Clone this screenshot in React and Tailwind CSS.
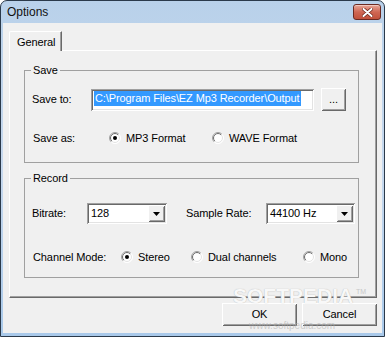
import React from 'react';

const raised =
  'shadow-[inset_1px_1px_#ffffff,inset_-1px_-1px_#696969,inset_2px_2px_#f0f0f0,inset_-2px_-2px_#a0a0a0]';
const sunken =
  'shadow-[inset_1px_1px_#a0a0a0,inset_-1px_-1px_#ffffff,inset_2px_2px_#696969,inset_-2px_-2px_#e3e3e3]';

const Radio = ({ checked }) => (
  <svg width="12" height="12" viewBox="0 0 12 12" className="shrink-0">
    <defs>
      <linearGradient id="rOuter" x1="0" y1="0" x2="1" y2="1">
        <stop offset="0.45" stopColor="#a0a0a0" />
        <stop offset="0.55" stopColor="#ffffff" />
      </linearGradient>
      <linearGradient id="rInner" x1="0" y1="0" x2="1" y2="1">
        <stop offset="0.45" stopColor="#696969" />
        <stop offset="0.55" stopColor="#e3e3e3" />
      </linearGradient>
    </defs>
    <circle cx="6" cy="6" r="5.5" fill="#ffffff" stroke="url(#rOuter)" strokeWidth="1" />
    <circle cx="6" cy="6" r="4.5" fill="#ffffff" stroke="url(#rInner)" strokeWidth="1" />
    {checked && <circle cx="6" cy="6" r="2" fill="#000000" />}
  </svg>
);

const Option = ({ checked, label, className = '' }) => (
  <div className={`flex items-center gap-[5px] ${className}`}>
    <Radio checked={checked} />
    <span className="leading-[13px]">{label}</span>
  </div>
);

const Combo = ({ value, width }) => (
  <div className={`flex h-[21px] items-stretch bg-white p-[2px] ${sunken} ${width}`}>
    <span className="flex-1 pl-[2px] leading-[17px]">{value}</span>
    <div className={`flex w-[17px] items-center justify-center bg-[#f0f0f0] ${raised}`}>
      <svg width="7" height="4" viewBox="0 0 7 4">
        <path d="M0 0h7L3.5 4z" fill="#000" />
      </svg>
    </div>
  </div>
);

const Button = ({ children, className = '' }) => (
  <div className={`flex items-center justify-center bg-[#f0f0f0] ${raised} ${className}`}>{children}</div>
);

const Group = ({ title, height, className = '', children }) => (
  <div className={`ml-[14px] w-[335px] border border-[#a0a0a0] ${height} ${className}`}>
    <span className="-mt-[8px] ml-[6px] block w-fit bg-[#f0f0f0] px-[2px] leading-[14px]">{title}</span>
    {children}
  </div>
);

export default function App() {
  return (
    <div className="relative flex h-[337px] w-[385px] flex-col overflow-hidden rounded-t-[7px] border border-[#2b3a4b] bg-gradient-to-b from-[#b9d1ea] via-[#c7d9ee] to-[#a9c9ea] font-['Liberation_Sans',Arial,sans-serif] text-[11px] tracking-[-0.1px] text-black">
      {/* title bar */}
      <div className="flex h-[22px] items-center justify-between pl-[6px] pr-[3px]">
        <span className="text-[12px] tracking-normal text-[#111]">Options</span>
        <div className="flex h-[16px] w-[28px] items-center justify-center rounded-[3px] border border-[#6b2a22] bg-gradient-to-b from-[#e8a697] via-[#cf6754] to-[#c1513c] shadow-[inset_0_1px_#f3c8be]">
          <svg width="11" height="9" viewBox="0 0 11 9">
            <path d="M1.5 1l8 7M9.5 1l-8 7" stroke="#6b2418" strokeWidth="3.4" strokeLinecap="round" />
            <path d="M1.5 1l8 7M9.5 1l-8 7" stroke="#ffffff" strokeWidth="2" strokeLinecap="round" />
          </svg>
        </div>
      </div>

      {/* client area */}
      <div className="mx-[2px] mb-[3px] flex flex-1 flex-col bg-[#f0f0f0] pl-[6px] pt-[8px]">
        {/* tab */}
        <div className="relative z-10 -mb-[1px] flex h-[20px] w-[53px] items-start rounded-tl-[2px] border-l border-t border-r border-l-white border-t-white border-r-[#696969] bg-[#f0f0f0] pl-[7px] pt-[3px] shadow-[inset_-1px_0_#a0a0a0]">
          <span className="leading-[14px]">General</span>
        </div>

        {/* tab panel */}
        <div className="flex h-[248px] w-[368px] flex-col border border-b-[#696969] border-l-white border-r-[#696969] border-t-white shadow-[inset_-1px_-1px_#a0a0a0]">
          <Group title="Save" height="h-[93px]" className="mt-[19px]">
            <div className="mt-[11px] flex h-[23px] items-center pl-[7px]">
              <span className="w-[59px]">Save to:</span>
              <div className={`flex h-[22px] w-[223px] items-start bg-white px-[2px] pt-[2px] ${sunken}`}>
                <span className="ml-[1px] whitespace-nowrap bg-[#3399ff] pl-[1px] pr-[1px] leading-[15px] text-white">
                  C:\Program Files\EZ Mp3 Recorder\Output
                </span>
              </div>
              <Button className="ml-[7px] h-[23px] w-[25px] leading-none">...</Button>
            </div>
            <div className="mt-[19px] flex items-center pl-[8px]">
              <span className="w-[76px]">Save as:</span>
              <Option checked label="MP3 Format" className="w-[103px]" />
              <Option label="WAVE Format" />
            </div>
          </Group>

          <Group title="Record" height="h-[100px]" className="mt-[15px]">
            <div className="mt-[18px] flex items-center pl-[7px]">
              <span className="w-[55px]">Bitrate:</span>
              <Combo value="128" width="w-[80px]" />
              <span className="ml-[19px] w-[80px]">Sample Rate:</span>
              <Combo value="44100 Hz" width="w-[89px]" />
            </div>
            <div className="mt-[25px] flex items-center pl-[8px]">
              <span className="w-[88px] whitespace-nowrap">Channel Mode:</span>
              <Option checked label="Stereo" className="w-[70px]" />
              <Option label="Dual channels" className="w-[112px]" />
              <Option label="Mono" />
            </div>
          </Group>
        </div>

        {/* buttons */}
        <div className="mt-[5px] flex w-[368px] justify-end gap-[5px]">
          <Button className="h-[23px] w-[75px]">OK</Button>
          <Button className="h-[23px] w-[75px]">Cancel</Button>
        </div>
      </div>

      {/* watermark */}
      <div className="pointer-events-none absolute left-[232px] top-[283px] text-[21px] font-bold leading-[24px] tracking-normal text-[#f8f8f8] [text-shadow:0_0_1px_#a8a8a8]">
        SOFTPEDIA
      </div>
      <div className="pointer-events-none absolute left-[355px] top-[286px] text-[7px] tracking-normal text-[#c8c8c8]">
        TM
      </div>
      <div className="pointer-events-none absolute left-[248px] top-[320px] text-[10px] leading-[10px] tracking-normal text-[#b0b0b0]/60">
        www.softpedia.com
      </div>
    </div>
  );
}
